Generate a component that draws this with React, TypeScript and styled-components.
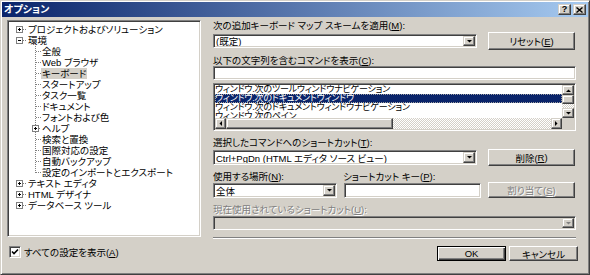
import React from "react";
import styled, { createGlobalStyle, css } from "styled-components";

const GlobalStyle = createGlobalStyle`
  html, body { margin: 0; padding: 0; background: #d4d0c8; }
  body {
    font-family: "Liberation Sans", "Noto Sans CJK JP", sans-serif;
    font-size: 9.5px;
    font-feature-settings: "palt";
    color: #000;
  }
  * { box-sizing: border-box; }
`;

const sunken = css`
  border: 1px solid;
  border-color: #808080 #ffffff #ffffff #808080;
  box-shadow: inset 1px 1px #404040, inset -1px -1px #d4d0c8;
  padding: 1px;
`;

const raised = css`
  border: 1px solid;
  border-color: #ffffff #404040 #404040 #ffffff;
  box-shadow: inset -1px -1px #808080, inset 1px 1px #d4d0c8;
  background: #d4d0c8;
`;

const raisedSmall = css`
  border: 1px solid;
  border-color: #d4d0c8 #404040 #404040 #d4d0c8;
  box-shadow: inset -1px -1px #808080, inset 1px 1px #ffffff;
  background: #d4d0c8;
`;

const Window = styled.div`
  width: 590px;
  height: 275px;
  background: #d4d0c8;
  border: 1px solid;
  border-color: #d4d0c8 #404040 #404040 #d4d0c8;
  box-shadow: inset 1px 1px #ffffff, inset -1px -1px #808080;
  padding: 1px;
  display: flex;
  flex-direction: column;
  overflow: hidden;
`;

const TitleBar = styled.div`
  height: 15px;
  flex: none;
  background: linear-gradient(to right, #0a246a, #a6caf0);
  display: flex;
  align-items: center;
  padding: 0 2px 0 2px;
`;

const TitleText = styled.div`
  flex: 1;
  color: #fff;
  font-weight: bold;
  font-size: 10px;
  line-height: 15px;
  white-space: nowrap;
`;

const TitleButtons = styled.div`
  display: flex;
  gap: 2px;
`;

const TitleButton = styled.div`
  ${raisedSmall};
  width: 13px;
  height: 11px;
  display: flex;
  align-items: center;
  justify-content: center;
  font-weight: bold;
  font-size: 9px;
  line-height: 9px;
  font-family: "Liberation Sans", sans-serif;
`;

const Body = styled.div`
  flex: 1;
  display: flex;
  padding: 3px 0 0 5px;
`;

const LeftCol = styled.div`
  width: 194px;
  display: flex;
  flex-direction: column;
`;

const Tree = styled.div`
  ${sunken};
  height: 217px;
  background: #fff;
  padding-top: 3px;
  overflow: hidden;
`;

const TreeRow = styled.div`
  height: 11px;
  display: flex;
  align-items: stretch;
  white-space: nowrap;
`;

const TreeLabel = styled.span<{ $selected?: boolean }>`
  line-height: 11px;
  padding: 0 1px;
  background: ${(p) => (p.$selected ? "#d4d0c8" : "transparent")};
`;

const CheckRow = styled.div`
  margin-top: 9px;
  padding-left: 2px;
  display: flex;
  align-items: center;
  gap: 3px;
  height: 12px;
`;

const CheckBox = styled.div`
  ${sunken};
  width: 12px;
  height: 12px;
  background: #fff;
  padding: 0;
  display: flex;
  align-items: center;
  justify-content: center;
`;

const RightCol = styled.div`
  margin-left: 12px;
  width: 363px;
  display: flex;
  flex-direction: column;
`;

const Label = styled.div<{ $mt?: number; $disabled?: boolean }>`
  margin-top: ${(p) => p.$mt ?? 0}px;
  height: 11px;
  line-height: 11px;
  white-space: nowrap;
  color: ${(p) => (p.$disabled ? "#808080" : "#000")};
  text-shadow: ${(p) => (p.$disabled ? "1px 1px #ffffff" : "none")};
`;

const Row = styled.div<{ $mt?: number; $h: number; $align?: string }>`
  margin-top: ${(p) => p.$mt ?? 0}px;
  height: ${(p) => p.$h}px;
  display: flex;
  align-items: ${(p) => p.$align ?? "center"};
  gap: 7px;
`;

const LabelsRow = styled.div<{ $mt?: number }>`
  margin-top: ${(p) => p.$mt ?? 0}px;
  height: 11px;
  display: flex;
`;

const Combo = styled.div<{ $w?: number; $h: number; $disabled?: boolean }>`
  ${sunken};
  width: ${(p) => (p.$w ? `${p.$w}px` : "100%")};
  height: ${(p) => p.$h}px;
  flex: none;
  background: ${(p) => (p.$disabled ? "#d4d0c8" : "#fff")};
  display: flex;
  align-items: stretch;
`;

const ComboText = styled.div`
  flex: 1;
  padding-left: 1px;
  display: flex;
  align-items: center;
  white-space: nowrap;
  overflow: hidden;
`;

const DropButton = styled.div`
  ${raisedSmall};
  width: 12px;
  flex: none;
  display: flex;
  align-items: center;
  justify-content: center;
`;

const TextBox = styled.div<{ $w?: number; $h: number }>`
  ${sunken};
  width: ${(p) => (p.$w ? `${p.$w}px` : "100%")};
  height: ${(p) => p.$h}px;
  flex: none;
  background: #fff;
`;

const Button = styled.div<{ $w?: number; $h: number; $disabled?: boolean; $default?: boolean; $ml?: number }>`
  ${raised};
  width: ${(p) => p.$w ?? 87}px;
  height: ${(p) => p.$h}px;
  margin-left: ${(p) => p.$ml ?? 0}px;
  flex: none;
  display: flex;
  align-items: center;
  justify-content: center;
  white-space: nowrap;
  color: ${(p) => (p.$disabled ? "#808080" : "#000")};
  text-shadow: ${(p) => (p.$disabled ? "1px 1px #ffffff" : "none")};
  ${(p) =>
    p.$default &&
    css`
      border: 1px solid #000;
      box-shadow: inset 1px 1px #ffffff, inset -1px -1px #404040, inset -2px -2px #808080;
    `}
`;

const ListBox = styled.div`
  ${sunken};
  margin-top: 3px;
  height: 48px;
  background: #fff;
  display: grid;
  grid-template-columns: 1fr 12px;
  grid-template-rows: 1fr 11px;
`;

const ListItems = styled.div`
  overflow: hidden;
  font-size: 9px;
  letter-spacing: -0.2px;
`;

const ListItem = styled.div<{ $selected?: boolean }>`
  height: 9px;
  line-height: 9px;
  padding-left: 0;
  white-space: nowrap;
  background: ${(p) => (p.$selected ? "#0a246a" : "transparent")};
  color: ${(p) => (p.$selected ? "#fff" : "#000")};
  outline: ${(p) => (p.$selected ? "1px dotted #a0a0a0" : "none")};
  outline-offset: -1px;
`;

const dither = css`
  background-color: #d4d0c8;
  background-image: conic-gradient(#ffffff 25%, #d4d0c8 0 50%, #ffffff 0 75%, #d4d0c8 0);
  background-size: 2px 2px;
`;

const VScroll = styled.div`
  display: flex;
  flex-direction: column;
`;

const HScroll = styled.div`
  display: flex;
`;

const ScrollArrow = styled.div<{ $w: number; $h: number }>`
  ${raisedSmall};
  width: ${(p) => p.$w}px;
  height: ${(p) => p.$h}px;
  flex: none;
  display: flex;
  align-items: center;
  justify-content: center;
`;

const Track = styled.div`
  flex: 1;
  ${dither};
`;

const Thumb = styled.div<{ $w?: number; $h?: number }>`
  ${raisedSmall};
  flex: none;
  width: ${(p) => (p.$w ? `${p.$w}px` : "auto")};
  height: ${(p) => (p.$h ? `${p.$h}px` : "auto")};
`;

const Corner = styled.div`
  background: #d4d0c8;
`;

const Separator = styled.div<{ $mt: number }>`
  margin-top: ${(p) => p.$mt}px;
  height: 2px;
  border-top: 1px solid #808080;
  border-bottom: 1px solid #ffffff;
`;

const ButtonsRow = styled.div`
  margin-top: 7px;
  margin-right: -2px;
  display: flex;
  justify-content: flex-end;
  gap: 3px;
`;

type Dir = "up" | "down" | "left" | "right";

const Tri = ({ dir, color = "#000" }: { dir: Dir; color?: string }) => {
  const pts: Record<Dir, string> = {
    down: "0,0 5,0 2.5,2.5",
    up: "0,3 5,3 2.5,0.5",
    left: "3,0 3,5 0.5,2.5",
    right: "0,0 0,5 2.5,2.5",
  };
  const vertical = dir === "up" || dir === "down";
  return (
    <svg width={vertical ? 5 : 3} height={vertical ? 3 : 5} viewBox={vertical ? "0 0 5 3" : "0 0 3 5"}>
      <polygon points={pts[dir]} fill={color} />
    </svg>
  );
};

type TreeItem = {
  label: string;
  level: 0 | 1;
  box?: "plus" | "minus";
  last?: boolean;
  selected?: boolean;
};

const treeItems: TreeItem[] = [
  { label: "プロジェクトおよびソリューション", level: 0, box: "plus" },
  { label: "環境", level: 0, box: "minus" },
  { label: "全般", level: 1 },
  { label: "Web ブラウザ", level: 1 },
  { label: "キーボード", level: 1, selected: true },
  { label: "スタートアップ", level: 1 },
  { label: "タスク一覧", level: 1 },
  { label: "ドキュメント", level: 1 },
  { label: "フォントおよび色", level: 1 },
  { label: "ヘルプ", level: 1, box: "plus" },
  { label: "検索と置換", level: 1 },
  { label: "国際対応の設定", level: 1 },
  { label: "自動バックアップ", level: 1 },
  { label: "設定のインポートとエクスポート", level: 1, last: true },
  { label: "テキスト エディタ", level: 0, box: "plus" },
  { label: "HTML デザイナ", level: 0, box: "plus" },
  { label: "データベース ツール", level: 0, box: "plus" },
];

const Connector = ({ item, index }: { item: TreeItem; index: number }) => {
  const w = item.level === 0 ? 18 : 32;
  const cx = item.level === 0 ? 10 : 26;
  const dots: React.ReactNode[] = [];
  const hStart = item.box ? cx + 4 : cx + 1;
  for (let x = hStart; x < w; x += 2) {
    dots.push(<rect key={`h${x}`} x={x} y={5} width={1} height={1} fill="#808080" />);
  }
  if (item.level === 1) {
    const end = item.last ? 6 : 11;
    for (let y = index % 2; y < end; y += 2) {
      dots.push(<rect key={`v${y}`} x={cx} y={y} width={1} height={1} fill="#808080" />);
    }
  }
  return (
    <svg width={w} height={11} viewBox={`0 0 ${w} 11`} style={{ flex: "none" }}>
      {dots}
      {item.box && (
        <g>
          <rect x={cx - 3 + 0.5} y={2.5} width={6} height={6} fill="#fff" stroke="#808080" strokeWidth={1} />
          <rect x={cx - 1} y={5} width={3} height={1} fill="#000" />
          {item.box === "plus" && <rect x={cx} y={4} width={1} height={3} fill="#000" />}
        </g>
      )}
    </svg>
  );
};

const listItems = [
  "ウィンドウ.次のツールウィンドウナビゲーション",
  "ウィンドウ.次のドキュメントウィンドウ",
  "ウィンドウ.次のドキュメントウィンドウナビゲーション",
  "ウィンドウ.次のペイン",
];

export default function App() {
  return (
    <>
      <GlobalStyle />
      <Window>
        <TitleBar>
          <TitleText>オプション</TitleText>
          <TitleButtons>
            <TitleButton>?</TitleButton>
            <TitleButton>
              <svg width="7" height="6" viewBox="0 0 7 6">
                <path d="M0.5 0.5 L6.5 5.5 M6.5 0.5 L0.5 5.5" stroke="#000" strokeWidth="1.4" />
              </svg>
            </TitleButton>
          </TitleButtons>
        </TitleBar>
        <Body>
          <LeftCol>
            <Tree>
              {treeItems.map((item, i) => (
                <TreeRow key={item.label}>
                  <Connector item={item} index={i} />
                  <TreeLabel $selected={item.selected}>{item.label}</TreeLabel>
                </TreeRow>
              ))}
            </Tree>
            <CheckRow>
              <CheckBox>
                <svg width="8" height="8" viewBox="0 0 8 8">
                  <path d="M1 3.5 L3 5.5 L7 1.5" stroke="#000" strokeWidth="1.6" fill="none" />
                </svg>
              </CheckBox>
              <span>
                すべての設定を表示(<u>A</u>)
              </span>
            </CheckRow>
          </LeftCol>
          <RightCol>
            <Label $mt={0}>
              次の追加キーボード マップ スキームを適用(<u>M</u>):
            </Label>
            <Row $mt={1} $h={18}>
              <Combo $w={264} $h={14}>
                <ComboText>(既定)</ComboText>
                <DropButton>
                  <Tri dir="down" />
                </DropButton>
              </Combo>
              <Button $h={18} $ml={4}>
                リセット(<u>E</u>)
              </Button>
            </Row>
            <Label $mt={5}>
              以下の文字列を含むコマンドを表示(<u>C</u>):
            </Label>
            <TextBox $h={14} />
            <ListBox>
              <ListItems>
                {listItems.map((t, i) => (
                  <ListItem key={t} $selected={i === 1}>
                    {t}
                  </ListItem>
                ))}
              </ListItems>
              <VScroll>
                <ScrollArrow $w={12} $h={10}>
                  <Tri dir="up" />
                </ScrollArrow>
                <Thumb $h={9} />
                <Track />
                <ScrollArrow $w={12} $h={10}>
                  <Tri dir="down" />
                </ScrollArrow>
              </VScroll>
              <HScroll>
                <ScrollArrow $w={11} $h={11}>
                  <Tri dir="left" />
                </ScrollArrow>
                <Thumb $w={167} />
                <Track />
                <ScrollArrow $w={11} $h={11}>
                  <Tri dir="right" />
                </ScrollArrow>
              </HScroll>
              <Corner />
            </ListBox>
            <Label $mt={6}>
              選択したコマンドへのショートカット(<u>T</u>):
            </Label>
            <Row $mt={1} $h={17}>
              <Combo $w={264} $h={15}>
                <ComboText>Ctrl+PgDn (HTML エディタ ソース ビュー)</ComboText>
                <DropButton>
                  <Tri dir="down" />
                </DropButton>
              </Combo>
              <Button $h={17} $ml={4}>
                削除(<u>R</u>)
              </Button>
            </Row>
            <LabelsRow $mt={5}>
              <Label style={{ width: 130 }}>
                使用する場所(<u>N</u>):
              </Label>
              <Label>
                ショートカット キー(<u>P</u>):
              </Label>
            </LabelsRow>
            <Row $h={16} $align="flex-end">
              <Combo $w={124} $h={15}>
                <ComboText>全体</ComboText>
                <DropButton>
                  <Tri dir="down" />
                </DropButton>
              </Combo>
              <TextBox $w={137} $h={15} />
              <Button $h={16} $disabled>
                割り当て(<u>S</u>)
              </Button>
            </Row>
            <Label $mt={6} $disabled>
              現在使用されているショートカット(<u>U</u>):
            </Label>
            <Combo $h={14} $disabled style={{ marginTop: 1 }}>
              <ComboText />
              <DropButton>
                <Tri dir="down" color="#808080" />
              </DropButton>
            </Combo>
            <Separator $mt={7} />
            <ButtonsRow>
              <Button $w={69} $h={15} $default>
                OK
              </Button>
              <Button $w={69} $h={15}>
                キャンセル
              </Button>
            </ButtonsRow>
          </RightCol>
        </Body>
      </Window>
    </>
  );
}
